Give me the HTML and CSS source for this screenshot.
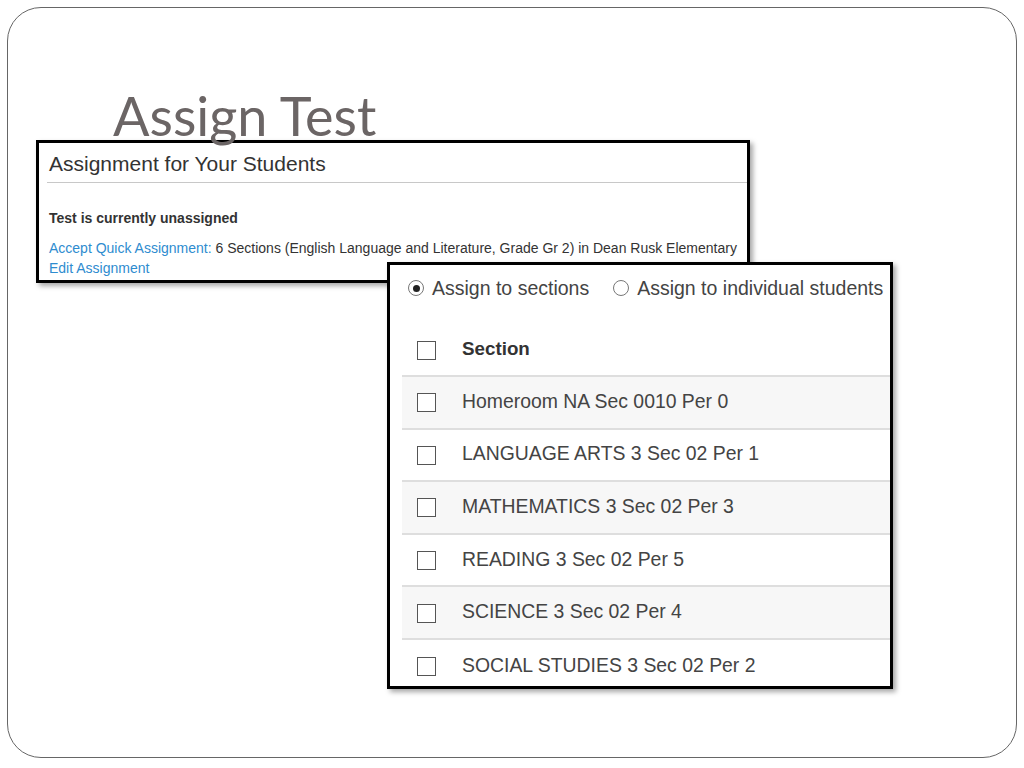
FILE: index.html
```html
<!DOCTYPE html>
<html>
<head>
<meta charset="utf-8">
<link rel="stylesheet" href="styles.css">
</head>
<body>
<div class="slide">
  <h1 class="title">Assign Test</h1>
  <div class="panel-assign">
    <div class="pa-head">Assignment for Your Students</div>
    <div class="pa-status">Test is currently unassigned</div>
    <div class="pa-line"><a class="link">Accept Quick Assignment:</a> 6 Sections (English Language and Literature, Grade Gr 2) in Dean Rusk Elementary</div>
    <div class="pa-line"><a class="link">Edit Assignment</a></div>
  </div>
  <div class="panel-sections">
    <div class="radios">
      <span class="radio on"></span><span class="rlabel">Assign to sections</span>
      <span class="radio"></span><span class="rlabel">Assign to individual students</span>
    </div>
    <div class="table">
      <div class="row head"><span class="cb"></span><span class="cell">Section</span></div>
      <div class="row alt"><span class="cb"></span><span class="cell">Homeroom NA Sec 0010 Per 0</span></div>
      <div class="row"><span class="cb"></span><span class="cell">LANGUAGE ARTS 3 Sec 02 Per 1</span></div>
      <div class="row alt"><span class="cb"></span><span class="cell">MATHEMATICS 3 Sec 02 Per 3</span></div>
      <div class="row"><span class="cb"></span><span class="cell">READING 3 Sec 02 Per 5</span></div>
      <div class="row alt"><span class="cb"></span><span class="cell">SCIENCE 3 Sec 02 Per 4</span></div>
      <div class="row last"><span class="cb"></span><span class="cell">SOCIAL STUDIES 3 Sec 02 Per 2</span></div>
    </div>
  </div>
</div>
</body>
</html>
```

FILE: styles.css
```css
html, body {
  margin: 0;
  padding: 0;
  background: #ffffff;
}
.slide {
  position: relative;
  box-sizing: border-box;
  margin: 7px 0 0 7px;
  width: 1010px;
  height: 751px;
  border: 1px solid #666;
  border-radius: 34px;
  background: #fff;
}
.title {
  margin: 0;
  padding: 82px 0 0 105px;
  height: 52px;
  font-family: Lato, "Open Sans", sans-serif;
  font-weight: 400;
  font-size: 54px;
  line-height: 52px;
  color: #6b6565;
}
.panel-assign {
  box-sizing: border-box;
  margin: -2px 0 0 28px;
  width: 714px;
  height: 143px;
  border: 3px solid #000;
  background: #fff;
  box-shadow: 3px 3px 5px rgba(0,0,0,0.35);
  font-family: "Liberation Sans", Arial, sans-serif;
  color: #333;
}
.pa-head {
  margin-left: 8px;
  padding: 8px 0 0 2px;
  height: 31px;
  font-size: 21px;
  line-height: 25px;
  border-bottom: 1px solid #c8c8c8;
}
.pa-status {
  padding: 27px 0 0 10px;
  font-size: 14px;
  font-weight: bold;
  line-height: 16px;
}
.pa-line {
  padding-left: 10px;
  font-size: 14px;
  line-height: 20px;
}
.pa-status + .pa-line {
  margin-top: 12px;
}
.link {
  color: #2e8ccf;
}
.panel-sections {
  position: absolute;
  left: 379px;
  top: 254px;
  box-sizing: border-box;
  width: 506px;
  height: 427px;
  border: 3px solid #000;
  background: #fff;
  box-shadow: 3px 3px 5px rgba(0,0,0,0.35);
  overflow: hidden;
  font-family: "Liberation Sans", Arial, sans-serif;
  color: #444;
}
.radios {
  display: flex;
  align-items: center;
  height: 30px;
  margin-top: 8px;
  padding-left: 18px;
  white-space: nowrap;
  font-size: 19.5px;
}
.radio {
  box-sizing: border-box;
  width: 16px;
  height: 16px;
  border: 1px solid #777;
  border-radius: 50%;
  display: flex;
  align-items: center;
  justify-content: center;
  flex: none;
  background: #fff;
}
.radio.on::after {
  content: "";
  width: 7px;
  height: 7px;
  border-radius: 50%;
  background: #222;
}
.rlabel {
  margin-left: 8px;
  margin-right: 24px;
}
.table {
  margin: 22px 0 0 12px;
}
.row {
  display: flex;
  align-items: center;
  box-sizing: border-box;
  height: 52.6px;
  padding-left: 15px;
  border-bottom: 2px solid #dedede;
  font-size: 19.4px;
  white-space: nowrap;
}
.row.head {
  height: 52px;
  font-weight: bold;
  font-size: 18.8px;
  color: #333;
}
.row.alt {
  background: #f7f7f7;
}
.row.last {
  border-bottom: none;
}
.cb {
  box-sizing: border-box;
  width: 19px;
  height: 19px;
  border: 1.5px solid #555;
  background: #fff;
  flex: none;
  margin-top: 1px;
}
.cell {
  margin-left: 26px;
  margin-top: -2px;
}
```
